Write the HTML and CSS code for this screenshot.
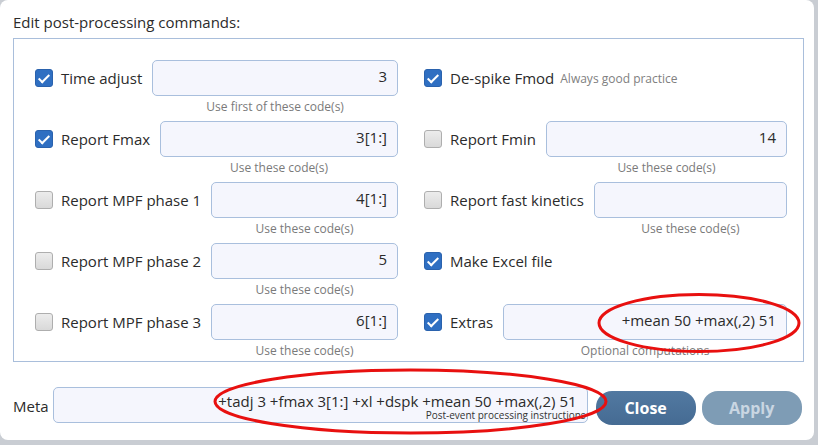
FILE: index.html
```html
<!DOCTYPE html>
<html>
<head>
<meta charset="utf-8">
<link rel="stylesheet" href="styles.css">
</head>
<body>
<div class="dialog">
  <div class="title">Edit post-processing commands:</div>
  <div class="box">
    <div class="row">
      <div class="lead"><span class="cb on"></span><span class="lbl">Time adjust</span></div>
      <div class="field"><div class="inp">3</div><div class="hint">Use first of these code(s)</div></div>
    </div>
    <div class="row">
      <div class="lead"><span class="cb on"></span><span class="lbl">De-spike Fmod</span><span class="note">Always good practice</span></div>
    </div>
    <div class="row">
      <div class="lead"><span class="cb on"></span><span class="lbl">Report Fmax</span></div>
      <div class="field"><div class="inp">3[1:]</div><div class="hint">Use these code(s)</div></div>
    </div>
    <div class="row">
      <div class="lead"><span class="cb"></span><span class="lbl">Report Fmin</span></div>
      <div class="field"><div class="inp">14</div><div class="hint">Use these code(s)</div></div>
    </div>
    <div class="row">
      <div class="lead"><span class="cb"></span><span class="lbl">Report MPF phase 1</span></div>
      <div class="field"><div class="inp">4[1:]</div><div class="hint">Use these code(s)</div></div>
    </div>
    <div class="row">
      <div class="lead"><span class="cb"></span><span class="lbl">Report fast kinetics</span></div>
      <div class="field"><div class="inp"></div><div class="hint">Use these code(s)</div></div>
    </div>
    <div class="row">
      <div class="lead"><span class="cb"></span><span class="lbl">Report MPF phase 2</span></div>
      <div class="field"><div class="inp">5</div><div class="hint">Use these code(s)</div></div>
    </div>
    <div class="row">
      <div class="lead"><span class="cb on"></span><span class="lbl">Make Excel file</span></div>
    </div>
    <div class="row">
      <div class="lead"><span class="cb"></span><span class="lbl">Report MPF phase 3</span></div>
      <div class="field"><div class="inp">6[1:]</div><div class="hint">Use these code(s)</div></div>
    </div>
    <div class="row">
      <div class="lead"><span class="cb on"></span><span class="lbl">Extras</span></div>
      <div class="field"><div class="inp">+mean 50 +max(,2) 51</div><div class="hint">Optional computations</div></div>
    </div>
  </div>
  <div class="footer">
    <span class="lbl">Meta</span>
    <div class="meta">+tadj 3 +fmax 3[1:] +xl +dspk +mean 50 +max(,2) 51<span class="meta-hint">Post-event processing instructions</span></div>
    <button class="btn close">Close</button>
    <button class="btn apply">Apply</button>
  </div>
  <svg class="marks" width="818" height="445" viewBox="0 0 818 445">
    <ellipse cx="699" cy="323" rx="100" ry="28.5" fill="none" stroke="#e8100f" stroke-width="3"/>
    <ellipse cx="410.5" cy="401.5" rx="195.5" ry="31.5" fill="none" stroke="#e8100f" stroke-width="3"/>
  </svg>
</div>
</body>
</html>
```

FILE: styles.css
```css
html, body {
  margin: 0;
  padding: 0;
}
body {
  background: #c9cdd3;
  width: 818px;
  height: 445px;
  overflow: hidden;
  font-family: "Open Sans", "Noto Sans", sans-serif;
  color: #2b2b2b;
}
.dialog {
  position: relative;
  width: 814px;
  height: 440px;
  background: #fff;
  border-radius: 8px;
  box-sizing: border-box;
  padding: 12px 0 0 13px;
}
.title {
  font-size: 15px;
  line-height: 20px;
  height: 20px;
  margin-bottom: 6px;
}
.box {
  width: 791px;
  box-sizing: border-box;
  border: 1px solid #a9bedb;
  padding: 21px 16px 3px 21px;
  display: grid;
  grid-template-columns: 363px 363px;
  column-gap: 26px;
  row-gap: 7px;
}
.row {
  display: flex;
  align-items: flex-start;
  height: 54px;
}
.lead {
  display: flex;
  align-items: center;
  height: 36px;
  flex: none;
}
.cb {
  width: 18px;
  height: 18px;
  box-sizing: border-box;
  border-radius: 3px;
  border: 1px solid #aeaeae;
  background: linear-gradient(#ececec, #d9d9d9);
  margin-right: 8px;
  flex: none;
  position: relative;
}
.cb.on {
  border: 1px solid #2a62ad;
  background: #2f6fc2;
}
.cb.on::after {
  content: "";
  position: absolute;
  left: 5px;
  top: 1.5px;
  width: 4px;
  height: 9px;
  border: solid #fff;
  border-width: 0 2.5px 2.5px 0;
  transform: rotate(45deg);
}
.lbl {
  font-size: 15px;
  color: #2b2b2b;
  white-space: nowrap;
}
.note {
  font-size: 12px;
  color: #808080;
  margin-left: 6px;
  margin-top: 1px;
}
.field {
  flex: 1;
  margin-left: 10px;
  display: flex;
  flex-direction: column;
  min-width: 0;
}
.inp {
  height: 36px;
  box-sizing: border-box;
  border: 1px solid #a9bfdd;
  border-radius: 5px;
  background: #f5f6fd;
  font-size: 15px;
  text-align: right;
  padding: 0 10px;
  line-height: 31px;
  color: #2b2b2b;
}
.hint {
  font-size: 12px;
  line-height: 14px;
  margin-top: 4px;
  text-align: center;
  color: #7a7a7a;
}
.footer {
  display: flex;
  align-items: center;
  margin-top: 25px;
  height: 38px;
}
.footer .lbl {
  margin-right: 4px;
}
.meta {
  position: relative;
  width: 535px;
  height: 36px;
  box-sizing: border-box;
  border: 1px solid #a9bfdd;
  border-radius: 5px;
  background: #f5f6fd;
  font-size: 15px;
  text-align: right;
  padding: 0 10px;
  line-height: 26px;
  white-space: nowrap;
  align-self: flex-start;
}
.meta-hint {
  position: absolute;
  right: 1px;
  bottom: 0px;
  font-size: 10px;
  line-height: 13px;
  color: #333;
}
.btn {
  width: 100px;
  height: 34px;
  border: none;
  border-radius: 16px;
  font-family: "Open Sans", "Noto Sans", sans-serif;
  font-weight: 700;
  font-size: 16px;
  padding: 0;
  margin-top: 4px;
  align-self: flex-start;
}
.close {
  margin-left: 8px;
  background: linear-gradient(#5279a1, #456b93);
  color: #fff;
}
.apply {
  margin-left: 6px;
  background: #7e9cb5;
  color: #c9d6e2;
}
.marks {
  position: absolute;
  left: 0;
  top: 0;
  pointer-events: none;
}
```
